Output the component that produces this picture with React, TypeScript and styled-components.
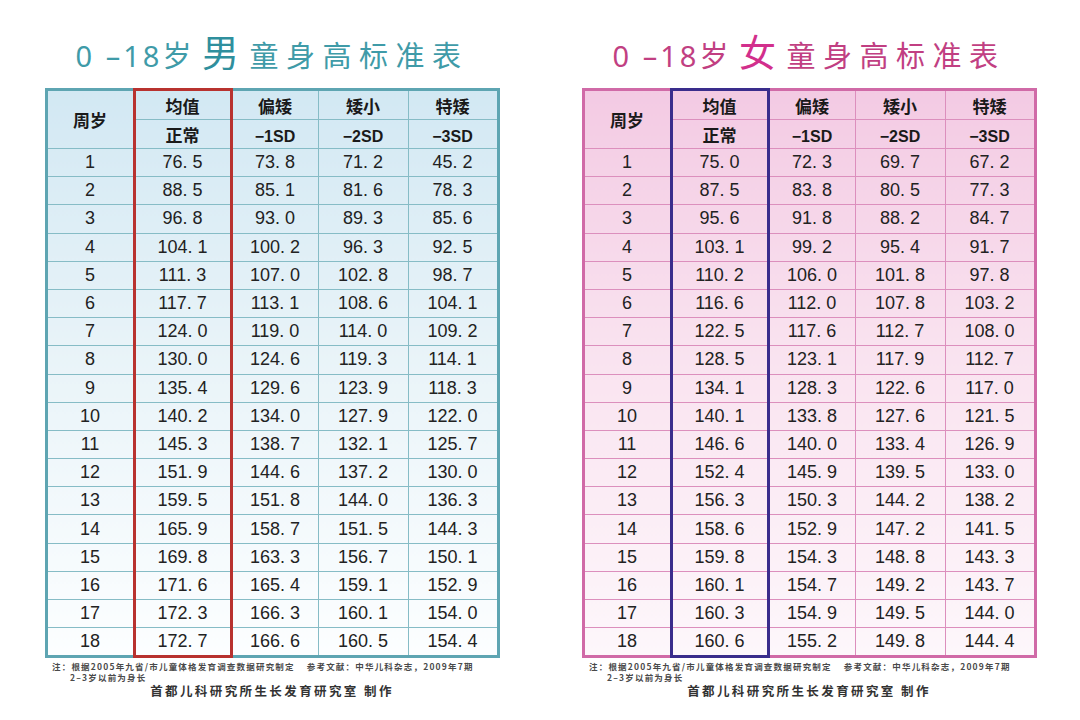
import React from 'react';
import styled, { createGlobalStyle } from 'styled-components';

type Row = [number, string, string, string, string];

interface Palette {
   title: string;
   big: string;
   frame: string;
   line: string;
   top: string;
   mid: string;
   bottom: string;
   box: string;
}

const boys: Row[] = [
   [1, '76.5', '73.8', '71.2', '45.2'],
   [2, '88.5', '85.1', '81.6', '78.3'],
   [3, '96.8', '93.0', '89.3', '85.6'],
   [4, '104.1', '100.2', '96.3', '92.5'],
   [5, '111.3', '107.0', '102.8', '98.7'],
   [6, '117.7', '113.1', '108.6', '104.1'],
   [7, '124.0', '119.0', '114.0', '109.2'],
   [8, '130.0', '124.6', '119.3', '114.1'],
   [9, '135.4', '129.6', '123.9', '118.3'],
   [10, '140.2', '134.0', '127.9', '122.0'],
   [11, '145.3', '138.7', '132.1', '125.7'],
   [12, '151.9', '144.6', '137.2', '130.0'],
   [13, '159.5', '151.8', '144.0', '136.3'],
   [14, '165.9', '158.7', '151.5', '144.3'],
   [15, '169.8', '163.3', '156.7', '150.1'],
   [16, '171.6', '165.4', '159.1', '152.9'],
   [17, '172.3', '166.3', '160.1', '154.0'],
   [18, '172.7', '166.6', '160.5', '154.4'],
];

const girls: Row[] = [
   [1, '75.0', '72.3', '69.7', '67.2'],
   [2, '87.5', '83.8', '80.5', '77.3'],
   [3, '95.6', '91.8', '88.2', '84.7'],
   [4, '103.1', '99.2', '95.4', '91.7'],
   [5, '110.2', '106.0', '101.8', '97.8'],
   [6, '116.6', '112.0', '107.8', '103.2'],
   [7, '122.5', '117.6', '112.7', '108.0'],
   [8, '128.5', '123.1', '117.9', '112.7'],
   [9, '134.1', '128.3', '122.6', '117.0'],
   [10, '140.1', '133.8', '127.6', '121.5'],
   [11, '146.6', '140.0', '133.4', '126.9'],
   [12, '152.4', '145.9', '139.5', '133.0'],
   [13, '156.3', '150.3', '144.2', '138.2'],
   [14, '158.6', '152.9', '147.2', '141.5'],
   [15, '159.8', '154.3', '148.8', '143.3'],
   [16, '160.1', '154.7', '149.2', '143.7'],
   [17, '160.3', '154.9', '149.5', '144.0'],
   [18, '160.6', '155.2', '149.8', '144.4'],
];

const teal: Palette = {
   title: '#3f9ba8',
   big: '#2f8f9d',
   frame: '#5ea5b2',
   line: '#86bcc6',
   top: '#d2e8f3',
   mid: '#e8f3f8',
   bottom: '#fcfeff',
   box: '#b8322f',
};

const pink: Palette = {
   title: '#c13f82',
   big: '#d22f8c',
   frame: '#d06aa7',
   line: '#dc8fbd',
   top: '#f3cae3',
   mid: '#f9e2ef',
   bottom: '#fdf7fb',
   box: '#3a2d8c',
};

// "76.5" -> "76. 5", the source prints a wide gap after the dot
const spaced = (v: string) => v.replace('.', '. ');

const GlobalStyle = createGlobalStyle`
   html, body {
      margin: 0;
      padding: 0;
      background: #ffffff;
   }
   body {
      font-family: 'Noto Sans CJK SC', 'Noto Sans', sans-serif;
      color: #1e1e1e;
   }
`;

const Page = styled.div`
   width: 1080px;
   height: 720px;
   display: flex;
   gap: 85px;
   padding: 29px 0 0 46px;
   box-sizing: border-box;
   overflow: hidden;
`;

const Panel = styled.section`
   width: 452px;
   display: flex;
   flex-direction: column;
   align-items: center;
`;

const Title = styled.h1<{ $color: string }>`
   margin: 0 0 15px;
   height: 44px;
   line-height: 44px;
   font-size: 29px;
   font-weight: 400;
   letter-spacing: 7.5px;
   color: ${p => p.$color};
   white-space: nowrap;
`;

const Digits = styled.span`
   font-family: 'Noto Sans', sans-serif;
   letter-spacing: 3px;
`;

const Big = styled.span<{ $color: string }>`
   font-size: 37px;
   font-weight: 400;
   color: ${p => p.$color};
   margin: 0 3px;
`;

const Table = styled.table<{ $p: Palette }>`
   width: 452px;
   border-collapse: collapse;
   table-layout: fixed;
   border: 3px solid ${p => p.$p.frame};
   background: linear-gradient(
      to bottom,
      ${p => p.$p.top} 0%,
      ${p => p.$p.mid} 45%,
      ${p => p.$p.bottom} 100%
   );
`;

const Head = styled.th<{ $p: Palette; $mark?: boolean; $first?: boolean }>`
   height: 28px;
   padding: 0;
   border: 1.5px solid ${p => p.$p.line};
   font-size: 17px;
   font-weight: 700;
   color: #1a1a1a;
   text-align: center;
   ${p =>
      p.$mark &&
      `
      border-left: 3px solid ${p.$p.box};
      border-right: 3px solid ${p.$p.box};
   `}
   ${p => p.$mark && p.$first && `border-top: 3px solid ${p.$p.box};`}
`;

const Code = styled.span`
   font-family: 'Liberation Sans', Arial, sans-serif;
   font-size: 16px;
   font-weight: 700;
`;

const Cell = styled.td<{ $p: Palette; $mark?: boolean; $last?: boolean }>`
   height: 27.2px;
   padding: 0;
   border: 1.5px solid ${p => p.$p.line};
   font-family: 'Liberation Sans', Arial, sans-serif;
   font-size: 18px;
   color: #222;
   text-align: center;
   white-space: pre;
   ${p =>
      p.$mark &&
      `
      border-left: 3px solid ${p.$p.box};
      border-right: 3px solid ${p.$p.box};
   `}
   ${p => p.$mark && p.$last && `border-bottom: 3px solid ${p.$p.box};`}
`;

const Notes = styled.div`
   align-self: stretch;
   padding: 3px 0 0 6px;
   font-size: 8.5px;
   font-weight: 700;
   letter-spacing: 1.2px;
   line-height: 11px;
   color: #4a4a4a;
   white-space: nowrap;
`;

const NoteLine = styled.div<{ $indent?: boolean }>`
   padding-left: ${p => (p.$indent ? '18px' : '0')};
`;

const Gap = styled.span`
   display: inline-block;
   width: 12px;
`;

const Maker = styled.div`
   margin-top: 0;
   line-height: 15px;
   font-size: 12.5px;
   font-weight: 700;
   letter-spacing: 2.4px;
   color: #333;
`;

const widths = [88, 97, 87, 90, 90];

const Chart: React.FC<{ sex: string; rows: Row[]; p: Palette }> = ({ sex, rows, p }) => (
   <Panel>
      <Title $color={p.title}>
         <Digits>0 –18</Digits>岁<Big $color={p.big}>{sex}</Big>童身高标准表
      </Title>
      <Table $p={p}>
         <colgroup>
            {widths.map((w, i) => (
               <col key={i} style={{ width: w }} />
            ))}
         </colgroup>
         <thead>
            <tr>
               <Head $p={p} rowSpan={2}>周岁</Head>
               <Head $p={p} $mark $first>均值</Head>
               <Head $p={p}>偏矮</Head>
               <Head $p={p}>矮小</Head>
               <Head $p={p}>特矮</Head>
            </tr>
            <tr>
               <Head $p={p} $mark>正常</Head>
               <Head $p={p}><Code>−1SD</Code></Head>
               <Head $p={p}><Code>−2SD</Code></Head>
               <Head $p={p}><Code>−3SD</Code></Head>
            </tr>
         </thead>
         <tbody>
            {rows.map((r, i) => (
               <tr key={r[0]}>
                  <Cell $p={p}>{r[0]}</Cell>
                  <Cell $p={p} $mark $last={i === rows.length - 1}>
                     {spaced(r[1])}
                  </Cell>
                  <Cell $p={p}>{spaced(r[2])}</Cell>
                  <Cell $p={p}>{spaced(r[3])}</Cell>
                  <Cell $p={p}>{spaced(r[4])}</Cell>
               </tr>
            ))}
         </tbody>
      </Table>
      <Notes>
         <NoteLine>
            注：根据2005年九省/市儿童体格发育调查数据研究制定<Gap />参考文献：中华儿科杂志，2009年7期
         </NoteLine>
         <NoteLine $indent>2–3岁以前为身长</NoteLine>
      </Notes>
      <Maker>首都儿科研究所生长发育研究室 制作</Maker>
   </Panel>
);

const App: React.FC = () => (
   <>
      <GlobalStyle />
      <Page>
         <Chart sex="男" rows={boys} p={teal} />
         <Chart sex="女" rows={girls} p={pink} />
      </Page>
   </>
);

export default App;
